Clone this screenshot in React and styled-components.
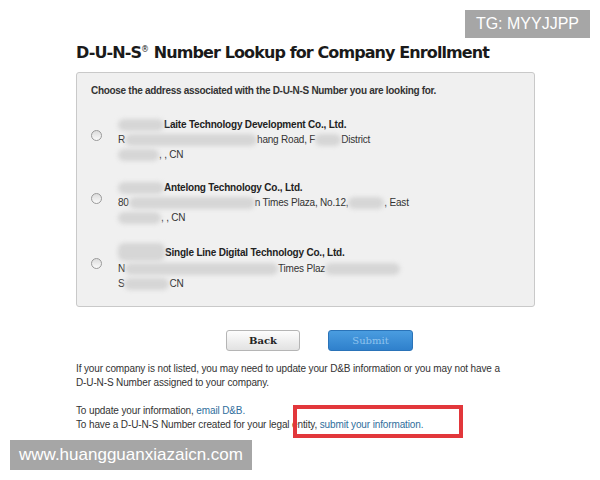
import React from 'react'
import styled, { createGlobalStyle } from 'styled-components'

const options = [
	{
		name: [{ blob: 46 }, 'Laite Technology Development Co., Ltd.'],
		address: ['R', { blob: 132 }, 'hang Road, F', { blob: 26 }, 'District'],
		city: [{ blob: 41 }, ', , CN'],
	},
	{
		name: [{ blob: 46 }, 'Antelong Technology Co., Ltd.'],
		address: ['80', { blob: 126 }, 'n Times Plaza, No.12,', { blob: 36 }, ', East'],
		city: [{ blob: 43 }, ', , CN'],
	},
	{
		name: [{ blob: 47, tall: true }, 'Single Line Digital Technology Co., Ltd.'],
		address: ['N', { blob: 153 }, 'Times Plaz', { blob: 75 }],
		city: ['S', { blob: 45 }, 'CN'],
	},
]

const renderParts = (parts) =>
	parts.map((part, i) =>
		typeof part === 'string' ? (
			<span key={i}>{part}</span>
		) : (
			<Blob key={i} width={part.blob} tall={part.tall} />
		)
	)

const App = () => {
	return (
		<Page>
			<GlobalStyle />
			<Title>
				D-U-N-S<Reg>®</Reg> Number Lookup for Company Enrollment
			</Title>
			<Panel>
				<Prompt>Choose the address associated with the D-U-N-S Number you are looking for.</Prompt>
				<OptionList>
					{options.map((option, i) => (
						<Option key={i}>
							<Radio />
							<Details>
								<Name>{renderParts(option.name)}</Name>
								<Line>{renderParts(option.address)}</Line>
								<Line>{renderParts(option.city)}</Line>
							</Details>
						</Option>
					))}
				</OptionList>
			</Panel>
			<ButtonRow>
				<BackButton>Back</BackButton>
				<SubmitButton>Submit</SubmitButton>
			</ButtonRow>
			<Note>
				If your company is not listed, you may need to update your D&amp;B information or you may not have a
				<br />
				D-U-N-S Number assigned to your company.
			</Note>
			<Note>
				To update your information, <LinkText>email D&amp;B.</LinkText>
				<br />
				To have a D-U-N-S Number created for your legal entity, <LinkText>submit your information.</LinkText>
			</Note>
			<Highlight />
			<Watermark corner="top">TG: MYYJJPP</Watermark>
			<Watermark corner="bottom">www.huangguanxiazaicn.com</Watermark>
		</Page>
	)
}

const GlobalStyle = createGlobalStyle`
	html, body {
		margin: 0;
		padding: 0;
		background: #fff;
	}
	body {
		font-family: 'Liberation Sans', Arial, sans-serif;
	}
`

const Page = styled.div`
	position: relative;
	box-sizing: border-box;
	width: 600px;
	height: 480px;
	padding: 42px 0 0 76px;
	overflow: hidden;
	background: #fff;
	color: #333;
`

const Title = styled.h1`
	margin: 0;
	font-family: 'DejaVu Sans', sans-serif;
	font-size: 16px;
	font-weight: bold;
	letter-spacing: -0.9px;
	line-height: 22px;
	color: #1a1a1a;
`

const Reg = styled.sup`
	font-size: 8px;
	vertical-align: 6px;
	line-height: 0;
	letter-spacing: 0;
	font-weight: normal;
`

const Panel = styled.div`
	box-sizing: border-box;
	width: 459px;
	height: 235px;
	margin-top: 8px;
	padding: 11px 14px 0;
	background: #f0f0f0;
	border: 1px solid #c9c9c9;
	border-radius: 3px;
`

const Prompt = styled.div`
	font-size: 10px;
	font-weight: bold;
	letter-spacing: -0.3px;
	line-height: 14px;
	color: #333;
`

const OptionList = styled.div`
	display: flex;
	flex-direction: column;
	gap: 18px;
	margin-top: 19px;
`

const Option = styled.div`
	display: flex;
	align-items: center;
	gap: 16px;
`

const Radio = styled.span`
	flex: none;
	width: 9px;
	height: 9px;
	margin-top: -8px;
	border: 1px solid #9a9a9a;
	border-radius: 50%;
	background: linear-gradient(#dcdcdc, #fafafa);
`

const Details = styled.div`
	display: flex;
	flex-direction: column;
	font-size: 10px;
	letter-spacing: -0.2px;
	line-height: 15px;
	color: #333;
`

const Line = styled.div`
	display: flex;
	align-items: center;
	white-space: nowrap;
`

const Name = styled(Line)`
	font-weight: bold;
	color: #222;
`

const Blob = styled.span`
	display: inline-block;
	width: ${({ width }) => width}px;
	height: ${({ tall }) => (tall ? 18 : 12)}px;
	border-radius: 6px;
	background: #d6d6d6;
	filter: blur(2px);
`

const ButtonRow = styled.div`
	display: flex;
	gap: 28px;
	margin: 23px 0 0 150px;
`

const BackButton = styled.div`
	box-sizing: border-box;
	width: 74px;
	height: 21px;
	display: flex;
	align-items: center;
	justify-content: center;
	border: 1px solid #b5b5b5;
	border-radius: 3px;
	background: linear-gradient(#fdfdfd, #e2e2e2);
	font-family: 'DejaVu Serif', serif;
	font-size: 10px;
	font-weight: bold;
	color: #222;
`

const SubmitButton = styled(BackButton)`
	width: 85px;
	border-color: #2a73b8;
	background: linear-gradient(#4a9de0, #2f80cc);
	color: #8fc3ee;
	font-weight: normal;
`

const Note = styled.p`
	margin: 11px 0 0;
	font-size: 10px;
	letter-spacing: -0.13px;
	line-height: 14px;
	color: #333;
	& + & {
		margin-top: 14px;
	}
`

const LinkText = styled.span`
	color: #2f6e9c;
`

const Highlight = styled.div`
	position: absolute;
	left: 293px;
	top: 405px;
	width: 170px;
	height: 33px;
	box-sizing: border-box;
	border: 4px solid #e2373b;
`

const Watermark = styled.div`
	position: absolute;
	${({ corner }) =>
		corner === 'top'
			? 'right: 10px; top: 10px; height: 28px; padding: 0 11px; font-size: 16px;'
			: 'left: 10px; top: 440px; height: 30px; padding: 0 9px; font-size: 17px;'}
	display: flex;
	align-items: center;
	background: #a6a6a6;
	color: #fff;
	font-family: 'Liberation Sans', Arial, sans-serif;
`

export default App
